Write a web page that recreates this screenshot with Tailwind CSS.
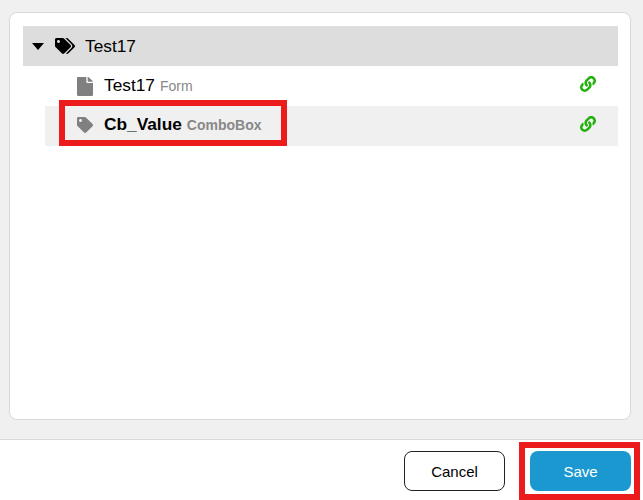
<!DOCTYPE html>
<html lang="en">
<head>
  <meta charset="UTF-8" />
  <title>Test17</title>
  <script src="https://cdn.jsdelivr.net/npm/@tailwindcss/browser@4"></script>
</head>
<body class="relative h-[500px] w-[643px] overflow-hidden bg-white font-['Liberation_Sans',Arial,sans-serif] text-black">
  <!-- tree panel -->
  <div class="h-[440px] border-b border-[#d9d9d9] bg-[#f0f0f0] pt-3 pr-3 pl-[9px]">
    <div class="h-[408px] rounded-lg border border-[#d9d9d9] bg-white pt-[13px] pr-[12px] pl-[13px]">
      <div class="flex h-10 items-center bg-[#dddddd] pl-[9px] text-[17.3px]">
        <span class="h-0 w-0 border-x-[6px] border-t-[7px] border-x-transparent border-t-black"></span>
        <svg class="ml-[11px] h-4 w-5" viewBox="0 0 640 512" fill="#000"><path d="M497.941 225.941L286.059 14.059A48 48 0 0 0 252.118 0H48C21.49 0 0 21.49 0 48v204.118a48 48 0 0 0 14.059 33.941l211.882 211.882c18.744 18.745 49.136 18.746 67.882 0l204.118-204.118c18.745-18.745 18.745-49.137 0-67.882zM112 160c-26.51 0-48-21.49-48-48s21.49-48 48-48 48 21.49 48 48-21.49 48-48 48zm513.941 133.823L421.823 497.941c-18.745 18.745-49.137 18.745-67.882 0l-.36-.36L527.64 323.522c16.999-16.999 26.36-39.6 26.36-63.64s-9.362-46.641-26.36-63.64L331.397 0h48.721a48 48 0 0 1 33.941 14.059l211.882 211.882c18.745 18.745 18.745 49.137 0 67.882z"/></svg>
        <span class="ml-[10px] translate-y-px">Test17</span>
      </div>
      <div class="ml-[22px] flex h-10 items-center pr-[22px] pl-[32px]">
        <svg class="h-[19px] w-4" viewBox="0 0 384 512" preserveAspectRatio="none" fill="#808080"><path d="M224 136V0H24C10.7 0 0 10.7 0 24v464c0 13.3 10.7 24 24 24h336c13.3 0 24-10.7 24-24V160H248c-13.2 0-24-10.8-24-24zm160-14.1v6.1H256V0h6.1c6.4 0 12.5 2.5 17 7l97.9 98c4.5 4.5 7 10.6 7 16.9z"/></svg>
        <span class="ml-[11px] text-[17.3px]">Test17</span>
        <span class="ml-[5px] text-sm text-[#888888]">Form</span>
        <svg class="mt-[-4px] ml-auto h-4 w-4" viewBox="0 0 512 512" fill="#22b00c"><path d="M326.612 185.391c59.747 59.809 58.927 155.698.36 214.59-.11.12-.24.25-.36.37l-67.2 67.2c-59.27 59.27-155.699 59.262-214.96 0-59.27-59.26-59.27-155.7 0-214.96l37.106-37.106c9.84-9.84 26.786-3.3 27.294 10.606.648 17.722 3.826 35.527 9.69 52.721 1.986 5.822.567 12.262-3.783 16.612l-13.087 13.087c-28.026 28.026-28.905 73.66-1.155 101.96 28.024 28.579 74.086 28.749 102.325.51l67.2-67.19c28.191-28.191 28.073-73.757 0-101.83-3.701-3.694-7.429-6.564-10.341-8.569a16.037 16.037 0 0 1-6.947-12.606c-.396-10.567 3.348-21.456 11.698-29.806l21.054-21.055c5.521-5.521 14.182-6.199 20.584-1.731a152.482 152.482 0 0 1 20.522 17.197zM467.547 44.449c-59.261-59.262-155.69-59.27-214.96 0l-67.2 67.2c-.12.12-.25.25-.36.37-58.566 58.892-59.387 154.781.36 214.59a152.454 152.454 0 0 0 20.521 17.196c6.402 4.468 15.064 3.789 20.584-1.731l21.054-21.055c8.35-8.35 12.094-19.239 11.698-29.806a16.037 16.037 0 0 0-6.947-12.606c-2.912-2.005-6.64-4.875-10.341-8.569-28.073-28.073-28.191-73.639 0-101.83l67.2-67.19c28.239-28.239 74.3-28.069 102.325.51 27.75 28.3 26.872 73.934-1.155 101.96l-13.087 13.087c-4.35 4.35-5.769 10.79-3.783 16.612 5.864 17.194 9.042 34.999 9.69 52.721.509 13.906 17.454 20.446 27.294 10.606l37.106-37.106c59.271-59.259 59.271-155.699.001-214.959z"/></svg>
      </div>
      <div class="ml-[22px] flex h-10 items-center bg-[#f0f0f0] pr-[22px] pl-[32px]">
        <svg class="mt-[-2px] h-4 w-4" viewBox="0 0 512 512" fill="#808080"><path d="M0 252.118V48C0 21.49 21.49 0 48 0h204.118a48 48 0 0 1 33.941 14.059l211.882 211.882c18.745 18.745 18.745 49.137 0 67.882L293.823 497.941c-18.745 18.745-49.137 18.745-67.882 0L14.059 286.059A48 48 0 0 1 0 252.118zM112 64c-26.51 0-48 21.49-48 48s21.49 48 48 48 48-21.49 48-48-21.49-48-48-48z"/></svg>
        <span class="ml-[11px] -translate-y-px text-[17.3px] font-bold">Cb_Value</span>
        <span class="ml-[5px] -translate-y-px text-sm font-bold text-[#888888]">ComboBox</span>
        <svg class="mt-[-4px] ml-auto h-4 w-4" viewBox="0 0 512 512" fill="#22b00c"><path d="M326.612 185.391c59.747 59.809 58.927 155.698.36 214.59-.11.12-.24.25-.36.37l-67.2 67.2c-59.27 59.27-155.699 59.262-214.96 0-59.27-59.26-59.27-155.7 0-214.96l37.106-37.106c9.84-9.84 26.786-3.3 27.294 10.606.648 17.722 3.826 35.527 9.69 52.721 1.986 5.822.567 12.262-3.783 16.612l-13.087 13.087c-28.026 28.026-28.905 73.66-1.155 101.96 28.024 28.579 74.086 28.749 102.325.51l67.2-67.19c28.191-28.191 28.073-73.757 0-101.83-3.701-3.694-7.429-6.564-10.341-8.569a16.037 16.037 0 0 1-6.947-12.606c-.396-10.567 3.348-21.456 11.698-29.806l21.054-21.055c5.521-5.521 14.182-6.199 20.584-1.731a152.482 152.482 0 0 1 20.522 17.197zM467.547 44.449c-59.261-59.262-155.69-59.27-214.96 0l-67.2 67.2c-.12.12-.25.25-.36.37-58.566 58.892-59.387 154.781.36 214.59a152.454 152.454 0 0 0 20.521 17.196c6.402 4.468 15.064 3.789 20.584-1.731l21.054-21.055c8.35-8.35 12.094-19.239 11.698-29.806a16.037 16.037 0 0 0-6.947-12.606c-2.912-2.005-6.64-4.875-10.341-8.569-28.073-28.073-28.191-73.639 0-101.83l67.2-67.19c28.239-28.239 74.3-28.069 102.325.51 27.75 28.3 26.872 73.934-1.155 101.96l-13.087 13.087c-4.35 4.35-5.769 10.79-3.783 16.612 5.864 17.194 9.042 34.999 9.69 52.721.509 13.906 17.454 20.446 27.294 10.606l37.106-37.106c59.271-59.259 59.271-155.699.001-214.959z"/></svg>
      </div>
    </div>
  </div>

  <!-- footer -->
  <div class="flex justify-end gap-[25px] pt-[11px] pr-3">
    <button class="h-10 w-[101px] rounded-lg border border-[#222222] bg-white pt-0.5 text-[15px]">Cancel</button>
    <button class="h-10 w-[101px] rounded-lg bg-[#1b98d0] pt-0.5 text-[15px] text-white">Save</button>
  </div>

  <!-- red callouts drawn on top of the screenshot -->
  <div class="absolute top-[100px] left-[59px] h-[46px] w-[228px] border-[6px] border-[#ec1c1c]"></div>
  <div class="absolute top-[442px] left-[519px] h-[58px] w-[121px] border-[6px] border-[#ec1c1c]"></div>
</body>
</html>
